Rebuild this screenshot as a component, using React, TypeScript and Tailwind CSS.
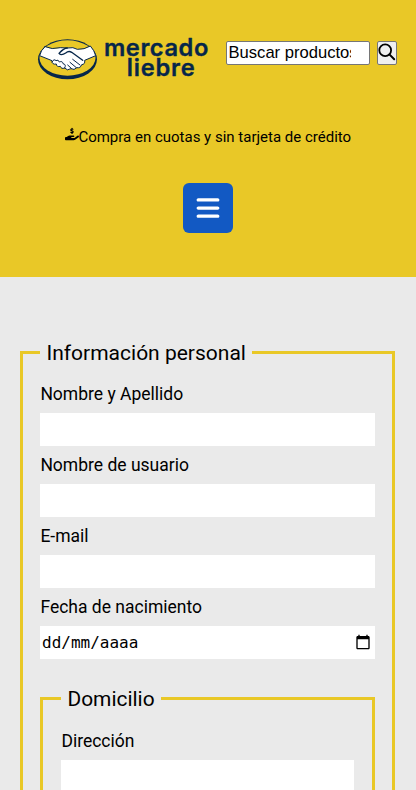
import { FaBars, FaHandHoldingDollar } from "react-icons/fa6";

function Logo() {
  return (
    <svg width="180" height="60" viewBox="0 0 540 180" className="block shrink-0">
      <ellipse cx="112.5" cy="88" rx="88.5" ry="60" fill="#06264a" />
      <ellipse cx="112.5" cy="84" rx="84" ry="53" fill="#e9c827" />
      <g stroke="#06264a" strokeWidth="3" strokeLinejoin="round" strokeLinecap="round" fill="#fff">
        <path d="M45 50 Q66 60 91 53 L112 54 Q130 50 142 58 Q163 59 181 48 Q193 61 197 77 L164 91 Q166 103 155 104 Q152 115 140 113 Q133 122 123 116 Q111 124 104 114 Q94 118 91 109 Q80 112 79 102 Q66 105 66 92 L29 77 Q32 61 45 50Z" />
        <path d="M112 54 Q102 54 87 70 Q94 78 107 69 Q116 61 125 67 L158 91" fill="none" strokeWidth="4" />
        <path d="M66 96 Q72 85 78 92 Q85 87 88 96 Q98 92 99 101 Q110 103 104 114" fill="none" />
        <path d="M128 88 L150 105 M120 97 L139 113 M113 105 L124 115" fill="none" />
      </g>
      <g fill="#06264a" stroke="#06264a" strokeWidth="1" strokeLinejoin="round" fontFamily="Inter, sans-serif" fontWeight="600" fontSize="71">
        <text x="222" y="79" textLength="313" lengthAdjust="spacing">mercado</text>
        <text x="290" y="137" textLength="204" lengthAdjust="spacing">liebre</text>
      </g>
    </svg>
  );
}

function Field({ label }: { label: string }) {
  return (
    <label className="block">
      <span className="block h-[38px] pl-[0.4px] text-[17.5px] leading-[38px]">{label}</span>
      <input className="block h-[33px] w-full bg-white px-0.5 outline-none" />
    </label>
  );
}

export default function App() {
  return (
    <div className="h-[790px] w-full overflow-hidden bg-[#eaeaea] font-[Roboto,sans-serif] text-black">
      <header className="flex h-[277px] flex-col items-center bg-[#e9c827]">
        <div className="flex w-full pt-[30px] pl-[30px]">
          <Logo />
          <div className="mt-[11px] ml-4 flex h-6 gap-[7px]">
            <div className="w-36 rounded-[2px] border border-[#767676] bg-white pr-[18px] pl-[1.5px]">
              <div className="overflow-hidden font-['Liberation_Sans',sans-serif] text-[16.6px] leading-[21px] whitespace-nowrap">
                Buscar productos
              </div>
            </div>
            <button className="flex w-5 justify-center rounded-[2px] border border-[#767676] bg-[#efefef] pt-px">
              <svg width="18" height="18" viewBox="0 0 18 18" fill="none" stroke="#000" className="shrink-0">
                <circle cx="7.2" cy="7.2" r="5.9" strokeWidth="1.8" />
                <path d="M11.4 11.4 L16.2 16.2" strokeWidth="2" strokeLinecap="round" />
              </svg>
            </button>
          </div>
        </div>
        <p className="mt-[37px] flex h-5 items-center text-[15px] leading-5">
          <FaHandHoldingDollar className="mb-[7px] size-[14px]" />
          <span className="-ml-[0.5px]">Compra en cuotas y sin tarjeta de crédito</span>
        </p>
        <button className="mt-9 flex size-[50px] items-center justify-center rounded-md bg-[#1259c3] pr-px text-white">
          <FaBars className="size-[26px]" />
        </button>
      </header>
      <main className="pt-[63px] pr-[21px] pl-5">
        <fieldset className="h-[600px] border-[3px] border-[#e9c827] px-[17px] pt-[10px]">
          <legend className="h-[25px] px-[6.5px] text-[21px] leading-[27px]">Información personal</legend>
          <Field label="Nombre y Apellido" />
          <Field label="Nombre de usuario" />
          <Field label="E-mail" />
          <label className="block">
            <span className="block h-[38px] pl-[0.4px] text-[17.5px] leading-[38px]">Fecha de nacimiento</span>
            <span className="flex h-[33px] items-center justify-between bg-white pr-1 pl-0.5">
              <span className="font-['DejaVu_Sans_Mono',monospace] text-[16px]">dd/mm/aaaa</span>
              <svg width="16" height="16" viewBox="0 0 24 24" className="mb-0.5">
                <path d="M20 3h-1V1h-2v2H7V1H5v2H4c-1.1 0-2 .9-2 2v16c0 1.1.9 2 2 2h16c1.1 0 2-.9 2-2V5c0-1.1-.9-2-2-2zm0 18H4V8h16v13z" />
              </svg>
            </span>
          </label>
          <fieldset className="mt-[27px] h-[300px] border-[3px] border-[#e9c827] px-[18px] pt-[11px]">
            <legend className="h-[25px] px-[6.5px] text-[20.9px] leading-[27px]">Domicilio</legend>
            <Field label="Dirección" />
          </fieldset>
        </fieldset>
      </main>
    </div>
  );
}
